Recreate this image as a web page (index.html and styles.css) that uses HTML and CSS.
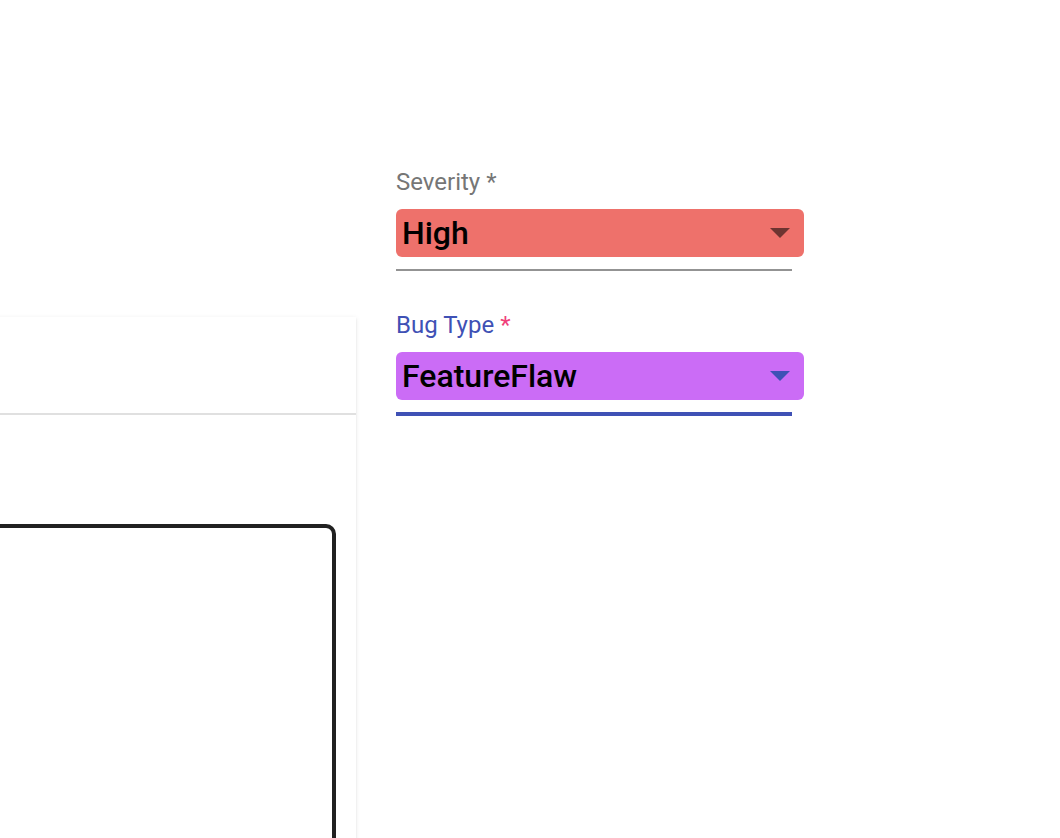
FILE: index.html
```html
<!DOCTYPE html>
<html lang="en">
<head>
<meta charset="utf-8">
<title>Bug form</title>
<link rel="stylesheet" href="styles.css">
</head>
<body>
<div class="page">
  <div class="col-left">
    <div class="text-underline"></div>
    <div class="card">
      <div class="card-header"></div>
      <div class="card-body">
        <div class="editor"></div>
      </div>
    </div>
  </div>
  <div class="col-right">
    <div class="field">
      <div class="label">Severity <span class="ast">*</span></div>
      <div class="select select-red">
        <span class="value">High</span>
        <svg class="arrow arrow-grey" width="20" height="10" viewBox="0 0 20 10"><polygon points="0,0 20,0 10,10"/></svg>
      </div>
      <div class="underline"></div>
    </div>
    <div class="field field-focused">
      <div class="label label-focused">Bug Type <span class="ast ast-focused">*</span></div>
      <div class="select select-purple">
        <span class="value">FeatureFlaw</span>
        <svg class="arrow arrow-blue" width="20" height="10" viewBox="0 0 20 10"><polygon points="0,0 20,0 10,10"/></svg>
      </div>
      <div class="underline underline-focused"></div>
    </div>
  </div>
</div>
</body>
</html>
```

FILE: styles.css
```css
html, body {
  margin: 0;
  padding: 0;
  height: 838px;
  overflow: hidden;
  background: #ffffff;
  font-family: Roboto, "Liberation Sans", Arial, sans-serif;
}

.page {
  display: flex;
  gap: 40px;
  height: 838px;
}

.col-left {
  margin-left: -44px;
  width: 400px;
  flex: none;
  padding-top: 257px;
  display: flex;
  flex-direction: column;
}

.text-underline {
  height: 2px;
  background: #939393;
}

.card {
  margin-top: 60px;
  background: #ffffff;
  box-shadow: 0 2px 2px rgba(0, 0, 0, 0.08), 0 1px 5px rgba(0, 0, 0, 0.08);
  flex: 1;
}

.card-header {
  height: 96px;
  border-bottom: 2px solid #e0e0e0;
}

.card-body {
  padding: 109px 20px 0 20px;
}

.editor {
  height: 420px;
  border: 4px solid #212121;
  border-radius: 10px;
}

.col-right {
  width: 408px;
  flex: none;
  padding-top: 168px;
  display: flex;
  flex-direction: column;
  gap: 40px;
}

.field {
  display: flex;
  flex-direction: column;
}

.label {
  font-size: 24px;
  line-height: 28px;
  color: #767676;
  height: 28px;
}

.label-focused {
  color: #3f51b5;
}

.ast-focused {
  color: #f0407a;
}

.select {
  margin-top: 13px;
  height: 48px;
  border-radius: 6px;
  display: flex;
  align-items: center;
  justify-content: space-between;
  padding: 0 14px 0 6px;
}

.select-red {
  background: #ee716b;
}

.select-purple {
  background: #cb6cf6;
}

.value {
  font-size: 32px;
  font-weight: 500;
  color: #000000;
  line-height: 48px;
}

.arrow-grey {
  fill: rgba(0, 0, 0, 0.54);
}

.arrow-blue {
  fill: #3f51b5;
}

.underline {
  margin-top: 12px;
  width: 396px;
  height: 2px;
  background: #939393;
}

.underline-focused {
  height: 4px;
  background: #3f51b5;
}
```
